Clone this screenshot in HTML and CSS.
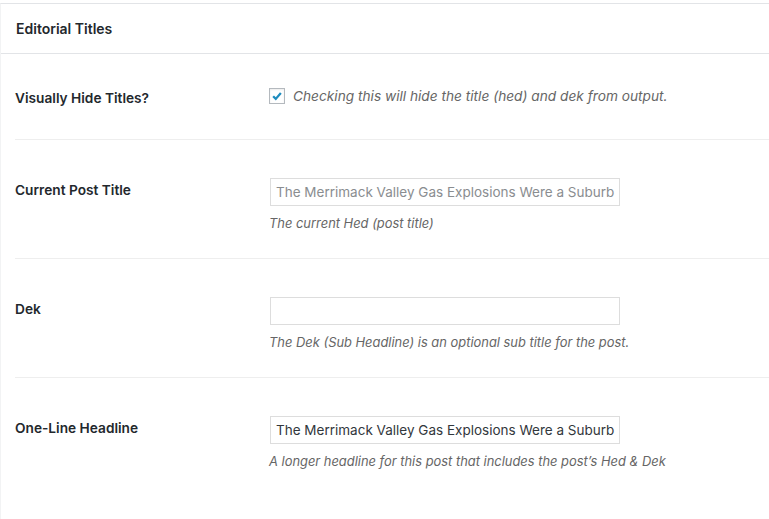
FILE: index.html
```html
<!DOCTYPE html>
<html>
<head>
<meta charset="utf-8">
<link rel="stylesheet" href="styles.css">
</head>
<body>
<div class="postbox">
  <h2 class="hndle">Editorial Titles</h2>
  <div class="inside">
    <div class="row row-check">
      <div class="label">Visually Hide Titles?</div>
      <div class="field check-field">
        <span class="checkbox"><svg viewBox="0 0 16 16" width="16" height="16"><path d="M3.6 8.2 L6.6 11.3 L12.4 4.6" fill="none" stroke="#1e8cbe" stroke-width="2.6" stroke-linecap="butt" stroke-linejoin="miter"/></svg></span>
        <span class="desc check-desc">Checking this will hide the title (hed) and dek from output.</span>
      </div>
    </div>
    <div class="row">
      <div class="label">Current Post Title</div>
      <div class="field">
        <div class="input readonly">The Merrimack Valley Gas Explosions Were a Suburb</div>
        <p class="desc">The current Hed (post title)</p>
      </div>
    </div>
    <div class="row">
      <div class="label">Dek</div>
      <div class="field">
        <div class="input"></div>
        <p class="desc">The Dek (Sub Headline) is an optional sub title for the post.</p>
      </div>
    </div>
    <div class="row last">
      <div class="label">One-Line Headline</div>
      <div class="field">
        <div class="input">The Merrimack Valley Gas Explosions Were a Suburb</div>
        <p class="desc desc-wide">A longer headline for this post that includes the post’s Hed &amp; Dek</p>
      </div>
    </div>
  </div>
</div>
</body>
</html>
```
FILE: styles.css
```css
html, body {
  margin: 0;
  padding: 0;
  background: #fff;
}
body {
  font-family: Inter, "Noto Sans", "Liberation Sans", sans-serif;
  color: #23282d;
  padding-top: 3px;
}
.postbox {
  border-top: 1px solid #e2e4e7;
  border-left: 1px solid #f2f3f4;
  background: #fff;
  height: 520px;
}
.hndle {
  margin: 0;
  height: 49px;
  line-height: 50px;
  padding-left: 15px;
  font-size: 14px;
  font-weight: 600;
  border-bottom: 1px solid #e2e4e7;
  color: #23282d;
}
.inside {
  padding-left: 14px;
}
.row {
  display: grid;
  grid-template-columns: 254px 1fr;
  border-bottom: 1px solid #eeeeee;
  padding: 38px 0 24px 0;
}
.row.last {
  border-bottom: none;
}
.row-check {
  padding: 33px 0 30px 0;
}
.label {
  font-size: 13.7px;
  font-weight: 600;
  line-height: 24px;
  color: #23282d;
}
.row-check .label {
  line-height: 22px;
  padding-top: 0;
}
.field {
  display: flex;
  flex-direction: column;
  align-items: flex-start;
}
.check-field {
  flex-direction: row;
  align-items: center;
  height: 18px;
}
.checkbox {
  width: 14px;
  height: 14px;
  border: 1px solid #b4b9be;
  box-shadow: inset 0 1px 2px rgba(0,0,0,0.08);
  display: inline-flex;
  align-items: center;
  justify-content: center;
  margin-right: 8px;
  background: #fff;
}
.checkbox svg {
  width: 14px;
  height: 14px;
}
.input {
  box-sizing: border-box;
  width: 350px;
  height: 28px;
  border: 1px solid #dddddd;
  padding: 0 5px;
  font-size: 13.5px;
  line-height: 26px;
  color: #32373c;
  white-space: nowrap;
  overflow: hidden;
  margin-left: 1px;
}
.input.readonly {
  color: #8a8d90;
}
.desc {
  margin: 8px 0 0 0;
  font-size: 12.9px;
  font-style: italic;
  color: #666;
  line-height: 20px;
}
.check-field .desc {
  margin: 0;
}
.check-desc {
  font-size: 13.7px;
}
.desc-wide {
  margin-left: 0;
}
```
